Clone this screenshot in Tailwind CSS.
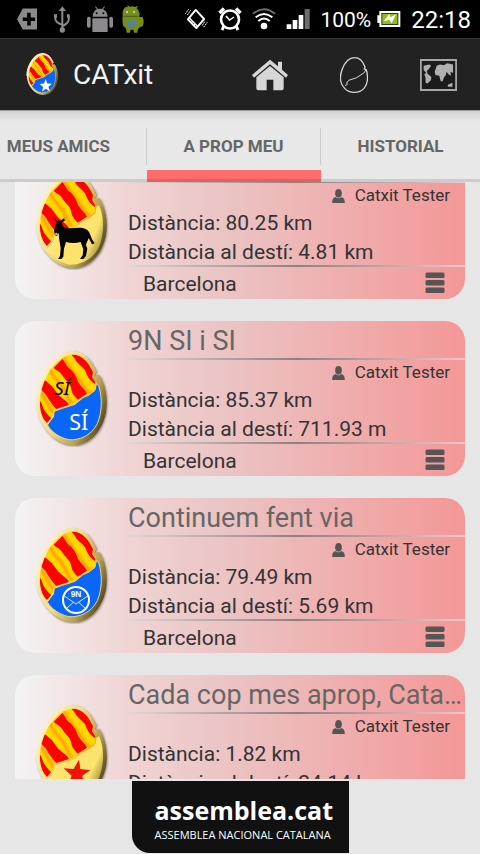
<!DOCTYPE html>
<html lang="ca">
<head>
<meta charset="utf-8">
<meta name="viewport" content="width=device-width, initial-scale=1">
<title>CATxit</title>
<script src="https://cdn.jsdelivr.net/npm/@tailwindcss/browser@4"></script>
</head>
<body class="bg-[#e6e6e6] font-['Roboto',sans-serif] text-[#333]">
<svg class="absolute size-0" aria-hidden="true">
  <defs>
    <linearGradient id="rim" x1="0" y1="0.2" x2="1" y2="0.75">
      <stop offset="0" stop-color="#fff3d8"/><stop offset="0.45" stop-color="#f3dd84"/><stop offset="0.75" stop-color="#b8a04e"/><stop offset="1" stop-color="#4a3f1c"/>
    </linearGradient>
    <linearGradient id="cream" x1="0" y1="0.3" x2="1" y2="0.8">
      <stop offset="0" stop-color="#fff0b0"/><stop offset="0.3" stop-color="#fde46c"/><stop offset="0.75" stop-color="#fbe36e"/><stop offset="1" stop-color="#8a7636"/>
    </linearGradient>
    <filter id="soft" x="-10%" y="-10%" width="120%" height="120%"><feGaussianBlur stdDeviation="2.5"/></filter>
    <clipPath id="top"><path d="M158 29C188 28 208 50 222 82L219 96L230 114L227 134L206 150L190 156L166 176L128 188L104 197L101 214L84 234C68 218 61 192 63 162C68 104 110 32 158 29Z"/></clipPath>
    <symbol id="egg" viewBox="45 15 225 291">
      <path d="M160 22C200 24 218 48 235 82L229 94L243 92C264 122 268 167 263 203C253 258 218 304 164 303C108 303 56 240 55 174Z" fill="#3a3020" opacity=".6" filter="url(#soft)"/>
      <path d="M157 18C197 18 215 45 232 80L226 92L240 90C262 122 267 165 261 200C251 255 215 300 160 300C105 298 51 235 51 170C52 95 105 18 157 18Z" fill="url(#rim)"/>
      <g clip-path="url(#top)">
        <path d="M40 15H250V250H40Z" fill="#ffd800"/>
        <path d="M135 38C150 70 178 96 190 118S208 140 218 148M92 72C105 105 128 115 138 140S152 166 160 176M66 140C80 165 88 185 108 208" fill="none" stroke="#ff9c00" stroke-width="9" filter="url(#soft)"/>
        <path d="M152 22L184 22C212 42 224 76 236 112L226 116C212 106 206 96 198 76C190 64 174 56 168 42ZM104 68L130 42C140 52 142 66 154 72C170 88 172 98 178 112C186 126 196 130 204 146L176 164C164 150 158 144 156 128C150 110 138 106 132 94C124 78 112 78 104 68ZM70 104C82 104 90 118 98 122C110 138 114 146 124 154C132 164 142 166 150 180L112 192C104 184 92 168 86 158C78 142 70 140 62 128ZM54 158C66 166 70 182 74 192C82 204 92 218 102 222L86 246C68 226 54 200 54 158Z" fill="#fb0300"/>
      </g>
    </symbol>
    <symbol id="shell" viewBox="45 15 225 291">
      <path d="M232 116L239 122C251 160 249 202 235 236C215 274 180 286 150 284C122 278 98 262 85 240L103 216L106 199L130 190L168 178L192 158L210 150L228 136Z" fill="currentColor" stroke="#f2d28a" stroke-width="3"/>
    </symbol>
    <symbol id="shellcream" viewBox="45 15 225 291">
      <path d="M232 116L240 112C258 150 254 202 240 236C220 278 180 292 150 290C118 282 96 262 83 242L103 216L106 199L130 190L168 178L192 158L210 150L228 136Z" fill="url(#cream)"/>
      <path d="M83 242L103 216L106 199L130 190L168 178L192 158L210 150L228 136L232 116" fill="none" stroke="#e9ac58" stroke-width="2"/>
    </symbol>
    <symbol id="user" viewBox="0 0 38 42">
      <ellipse cx="19" cy="13" rx="10" ry="13"/><path d="M0 42C0 31 3 26 11 24C15 29 23 29 27 24C35 26 38 31 38 42Z"/>
    </symbol>
    <symbol id="menu" viewBox="0 0 20 22">
      <rect x=".5" y=".5" width="19" height="5.500" rx="1.500"/><rect x=".5" y="8" width="19" height="5.500" rx="1.500"/><rect x=".5" y="15.500" width="19" height="5.500" rx="1.500"/>
    </symbol>
  </defs>
</svg>

<div class="flex h-screen flex-col overflow-hidden">
  <div class="flex h-[38px] shrink-0 items-center bg-black pr-[9px] pl-[17px] text-white">
    <div class="flex items-center gap-[17px]">
      <svg class="h-[22px] w-5" viewBox="50 25 62 65"><path d="M50 58L68 25H112V90H68Z" fill="#8c8a8c"/><path d="M87 38V78M68 58H106" stroke="#000" stroke-width="11"/></svg>
      <svg class="h-[27px] w-4" viewBox="166 16 48 81" fill="none" stroke="#8c8a8c" stroke-width="6"><path d="M191 28V88M170 46V56Q172 66 190 72M210 46V58Q208 68 192 76"/><path d="M180 31L191 17L202 31ZM166 41H175V51H166ZM205 41H213V51H205Z" fill="#8c8a8c" stroke="none"/><circle cx="191" cy="88" r="8" fill="#8c8a8c" stroke="none"/></svg>
      <svg class="h-[26px] w-[26px]" viewBox="258 18 78 78" fill="#8c8a8c"><path d="M275 50C276 36 283 30 288 28L282 20L284 19L291 27Q297 25 303 27L310 19L312 20L306 28C312 31 319 37 320 50Z"/><rect x="274" y="55" width="46" height="41" rx="2"/><rect x="258" y="50" width="11" height="33" rx="5"/><rect x="325" y="50" width="11" height="33" rx="5"/><circle cx="287" cy="40" r="3" fill="#000"/><circle cx="307" cy="40" r="3" fill="#000"/></svg>
      <svg class="-ml-2 h-[28px] w-[22px]" viewBox="364 14 66 84"><path d="M366 44C364 24 376 18 382 20L378 14L388 19Q396 16 402 20L412 16L408 24C416 32 418 40 416 50L426 50Q432 62 426 78L418 80L412 86L410 97H400L398 88H390L388 97H378L376 84L368 78Q364 66 366 44Z" fill="#768c1b"/><path d="M368 48H414" stroke="#4b5d10" stroke-width="3"/><circle cx="379" cy="35" r="3" fill="#dde"/><circle cx="400" cy="35" r="3" fill="#dde"/><path d="M374 58L390 64L404 57L402 70L408 82L394 77L380 84L382 72Z" fill="#4e83b0"/></svg>
    </div>
    <div class="ml-auto flex items-center gap-[10px]">
      <svg class="h-6 w-6" viewBox="556 22 74 72" fill="none" stroke="#fff" stroke-width="5"><path d="M592 30L618 58L594 86L568 59Z" stroke-linejoin="round" stroke-width="6"/><path d="M572 54L599 82M583 65L577 71M591 73L585 79" stroke-width="4"/><path d="M570 28L560 42M577 31L566 46M628 68L616 84M620 66L611 80" stroke-width="3" stroke-dasharray="5 2"/></svg>
      <svg class="h-6 w-6" viewBox="0 0 24 24" fill="none" stroke="#fff"><circle cx="12" cy="12.500" r="9" stroke-width="2.600"/><path d="M8 9L11.500 13L16 10" stroke-width="1.500"/><path d="M1.500 6L6 1.500M18 1.500L22.500 6" stroke-width="3.500"/><path d="M6 19L4 23M18 19L20 23" stroke-width="3"/></svg>
      <svg class="h-[22px] w-6" viewBox="44 22 72 66" fill="none" stroke-width="6"><path d="M47 39Q80 12 113 39" stroke="#6d6d6d"/><path d="M55 50Q80 30 105 50M63 61Q80 46 97 61" stroke="#fff"/><circle cx="80" cy="76" r="10" fill="#fff"/></svg>
      <svg class="h-5 w-6" viewBox="149 27 70 60" fill="#fff"><path d="M150 73H164V87H150ZM168 60H182V87H168ZM186 45H200V87H186Z"/><path d="M204 27H219V87H204Z" fill="#6d6d6d"/></svg>
      <span class="pt-px text-[21px] leading-8">100%</span>
      <svg class="-ml-1 h-4 w-6" viewBox="414 33 70 48"><path d="M420 33H483V81H420V69H414V46H420Z" fill="#fff"/><path d="M426 39H477V75H426Z" fill="#333"/><path d="M429 42H474V72H429Z" fill="#8cc01e"/><path d="M433 64L450 42L454 52L470 43L457 70L450 59Z" fill="#fff"/></svg>
      <span class="pt-[2px] text-2xl leading-8">22:18</span>
    </div>
  </div>

  <header class="flex h-[72px] shrink-0 items-center border-t border-[#333] bg-[#222] pr-[23px] pl-[26px]">
    <div class="relative h-[43px] w-[33px]">
      <svg class="absolute inset-0 size-full"><use href="#egg"/></svg>
      <svg class="absolute inset-0 size-full text-[#0a66f5]"><use href="#shell"/></svg>
      <svg class="absolute inset-0 size-full" viewBox="45 15 225 291"><path d="M51 170C52 95 105 18 157 18C197 18 215 45 232 80" fill="none" stroke="#fff0c0" stroke-width="7"/><path d="M180 192L190 222L222 224L198 244L208 276L180 258L154 278L162 246L138 226L168 222Z" fill="#fff"/></svg>
    </div>
    <h1 class="ml-[14px] text-[28px] leading-8 text-[#f3f3f3]">CATxit</h1>
    <nav class="ml-auto flex items-center gap-[52px]">
      <button aria-label="Inici"><svg class="block h-8 w-9" viewBox="36 176 108 96" fill="#d6d6d6"><path d="M36 224L90 178L114 198V184H126V208L144 224L138 232L90 192L42 232Z"/><path d="M49 231L90 197L131 231V264Q131 270 125 270H100V238H80V270H55Q49 270 49 264Z"/></svg></button>
      <button aria-label="Ous"><svg class="block h-9 w-7" viewBox="300 168 84 108" fill="none" stroke="#d6d6d6" stroke-width="4"><path d="M344 170C362 170 370 184 375 198L373 204L379 206C386 232 382 250 372 262C358 278 328 278 314 262C300 248 298 228 306 206C314 184 326 170 344 170Z"/><path d="M377 206L374 214L350 230L326 238L320 246L322 250L315 254" stroke-width="3"/></svg></button>
      <button aria-label="Mapa"><svg class="block h-8 w-[37px]" viewBox="539 174 113 96" fill="#b0b0b0"><path d="M541 176H650V268H541Z" fill="#1c1c1c" stroke="#a6a6a6" stroke-width="7"/><path d="M550 194L568 190L573 194L566 204L560 210L562 218L574 228L572 238L562 248L556 246V230L552 220L558 216L550 206ZM586 206L590 194L600 190L612 192L622 186L640 190V216L632 212L634 224L626 220L620 212L618 222L612 230L608 242L602 240L598 224L586 222L584 212ZM624 252L638 246V258H624Z"/></svg></button>
    </nav>
  </header>

  <div role="tablist" class="grid h-[72px] shrink-0 grid-cols-[147fr_174fr_159fr] border-t border-[#999] bg-linear-to-b from-[#d4d4d4] to-[#e8e8e8] to-15% text-[17px] font-bold text-[#666]">
    <button role="tab" class="flex flex-col"><span class="mt-[17px] flex h-[37px] w-full items-center justify-end border-r border-[#ccc] pr-9 whitespace-nowrap">MEUS AMICS</span><span class="mt-auto h-[3px] w-full bg-[#ccc]"></span></button>
    <button role="tab" aria-selected="true" class="flex flex-col"><span class="mt-[17px] flex h-[37px] w-full items-center justify-center border-r border-[#ccc] whitespace-nowrap">A PROP MEU</span><span class="mt-auto h-3 w-full border-b-[3px] border-[#e06161] bg-[#ff6c6c]"></span></button>
    <button role="tab" class="flex flex-col"><span class="mt-[17px] flex h-[37px] w-full items-center justify-center">HISTORIAL</span><span class="mt-auto h-[3px] w-full bg-[#ccc]"></span></button>
  </div>

  <main class="min-h-0 flex-1 overflow-hidden px-[15px]">
    <div class="-mt-[38px] flex flex-col gap-[22px]">

      <article class="flex items-center rounded-[20px] bg-[linear-gradient(to_right,#f4f4f4,#f0d4d4_25%,#ebc3c3_48%,#f49797)] pl-[19px]">
        <div class="relative h-[97px] w-[75px] shrink-0">
          <svg class="absolute inset-0 size-full"><use href="#egg"/></svg>
          <svg class="absolute inset-0 size-full"><use href="#shellcream"/></svg>
          <svg class="absolute inset-0 size-full" viewBox="45 15 225 291"><g transform="translate(15 36)"><path d="M84 111L100 122L110 122L124 111L119 118L125 119L114 128L116 138C120 143 128 145 138 145C156 144 178 140 190 150C198 158 200 168 204 178L212 190L204 193L194 174C192 182 186 188 186 196L190 206L186 228L178 237H168L176 226L178 208L170 186C156 190 140 190 126 186L120 206L118 230L112 237H102L108 228L110 204L106 180C104 170 106 164 103 158L99 168L93 166L90 154L95 136L98 126Z" fill="#050505"/><circle cx="97" cy="162" r="4" fill="#e8a090"/></g></svg>
        </div>
        <div class="ml-[19px] min-w-0 flex-1">
          <div class="h-[37px]"></div>
          <div class="h-[2px] bg-linear-to-r from-[#e0d8d8] via-[#8f8080] to-[#eccaca]"></div>
          <div class="flex h-6 items-center justify-end gap-[10px] pt-px pr-[15px] text-[17px]"><svg class="h-[14px] w-[13px] fill-[#555]"><use href="#user"/></svg>Catxit Tester</div>
          <p class="pt-1 text-[21px] leading-[25px]">Distància: 80.25 km</p>
          <p class="pt-1 text-[21px] leading-[25px]">Distància al destí: 4.81 km</p>
          <div class="h-[2px] bg-linear-to-r from-[#e0d8d8] via-[#8f8080] to-[#eccaca]"></div>
          <div class="flex h-8 items-center justify-between pr-5 pl-[15px]"><span class="pt-[3px] text-[21px] leading-[25px]">Barcelona</span><button aria-label="Opcions"><svg class="block h-[22px] w-5 fill-[#555]"><use href="#menu"/></svg></button></div>
        </div>
      </article>

      <article class="flex items-center rounded-[20px] bg-[linear-gradient(to_right,#f4f4f4,#f0d4d4_25%,#ebc3c3_48%,#f49797)] pl-[19px]">
        <div class="relative h-[97px] w-[75px] shrink-0">
          <svg class="absolute inset-0 size-full"><use href="#egg"/></svg>
          <svg class="absolute inset-0 size-full text-[#0a66f5]"><use href="#shell"/></svg>
          <svg class="absolute inset-0 size-full font-['Noto_Sans',sans-serif]" viewBox="45 15 225 291"><text x="106" y="151" fill="#000" font-size="56" font-style="italic">SÍ</text><text x="151" y="254" fill="#fff" font-size="64">SÍ</text></svg>
        </div>
        <div class="ml-[19px] min-w-0 flex-1">
          <h2 class="truncate pt-1 text-[27px] leading-[33px] text-[#666]">9N SI i SI</h2>
          <div class="h-[2px] bg-linear-to-r from-[#e0d8d8] via-[#8f8080] to-[#eccaca]"></div>
          <div class="flex h-6 items-center justify-end gap-[10px] pt-px pr-[15px] text-[17px]"><svg class="h-[14px] w-[13px] fill-[#555]"><use href="#user"/></svg>Catxit Tester</div>
          <p class="pt-1 text-[21px] leading-[25px]">Distància: 85.37 km</p>
          <p class="pt-1 text-[21px] leading-[25px]">Distància al destí: 711.93 m</p>
          <div class="h-[2px] bg-linear-to-r from-[#e0d8d8] via-[#8f8080] to-[#eccaca]"></div>
          <div class="flex h-8 items-center justify-between pr-5 pl-[15px]"><span class="pt-[3px] text-[21px] leading-[25px]">Barcelona</span><button aria-label="Opcions"><svg class="block h-[22px] w-5 fill-[#555]"><use href="#menu"/></svg></button></div>
        </div>
      </article>

      <article class="flex items-center rounded-[20px] bg-[linear-gradient(to_right,#f4f4f4,#f0d4d4_25%,#ebc3c3_48%,#f49797)] pl-[19px]">
        <div class="relative h-[97px] w-[75px] shrink-0">
          <svg class="absolute inset-0 size-full"><use href="#egg"/></svg>
          <svg class="absolute inset-0 size-full text-[#0a66f5]"><use href="#shell"/></svg>
          <svg class="absolute inset-0 size-full font-['Liberation_Sans',sans-serif]" viewBox="45 15 225 291"><circle cx="171" cy="234" r="39" fill="none" stroke="#fff" stroke-width="6"/><path d="M136 222L171 246L206 222M144 258L163 241M198 258L179 241" fill="none" stroke="#fff" stroke-width="2.500"/><text x="171" y="226" text-anchor="middle" font-size="25" font-weight="bold" fill="#fff">9N</text></svg>
        </div>
        <div class="ml-[19px] min-w-0 flex-1">
          <h2 class="truncate pt-1 text-[27px] leading-[33px] text-[#666]">Continuem fent via</h2>
          <div class="h-[2px] bg-linear-to-r from-[#e0d8d8] via-[#8f8080] to-[#eccaca]"></div>
          <div class="flex h-6 items-center justify-end gap-[10px] pt-px pr-[15px] text-[17px]"><svg class="h-[14px] w-[13px] fill-[#555]"><use href="#user"/></svg>Catxit Tester</div>
          <p class="pt-1 text-[21px] leading-[25px]">Distància: 79.49 km</p>
          <p class="pt-1 text-[21px] leading-[25px]">Distància al destí: 5.69 km</p>
          <div class="h-[2px] bg-linear-to-r from-[#e0d8d8] via-[#8f8080] to-[#eccaca]"></div>
          <div class="flex h-8 items-center justify-between pr-5 pl-[15px]"><span class="pt-[3px] text-[21px] leading-[25px]">Barcelona</span><button aria-label="Opcions"><svg class="block h-[22px] w-5 fill-[#555]"><use href="#menu"/></svg></button></div>
        </div>
      </article>

      <article class="flex items-center rounded-[20px] bg-[linear-gradient(to_right,#f4f4f4,#f0d4d4_25%,#ebc3c3_48%,#f49797)] pl-[19px]">
        <div class="relative h-[97px] w-[75px] shrink-0">
          <svg class="absolute inset-0 size-full"><use href="#egg"/></svg>
          <svg class="absolute inset-0 size-full"><use href="#shellcream"/></svg>
          <svg class="absolute inset-0 size-full" viewBox="45 15 225 291"><path d="M180 182L184 210L214 214L190 230L196 260L174 242L148 256L158 230L134 208L164 210Z" fill="#f01408"/></svg>
        </div>
        <div class="ml-[19px] min-w-0 flex-1">
          <h2 class="truncate pt-1 text-[27px] leading-[33px] text-[#666]">Cada cop mes aprop, Catalunya</h2>
          <div class="h-[2px] bg-linear-to-r from-[#e0d8d8] via-[#8f8080] to-[#eccaca]"></div>
          <div class="flex h-6 items-center justify-end gap-[10px] pt-px pr-[15px] text-[17px]"><svg class="h-[14px] w-[13px] fill-[#555]"><use href="#user"/></svg>Catxit Tester</div>
          <p class="pt-1 text-[21px] leading-[25px]">Distància: 1.82 km</p>
          <p class="pt-1 text-[21px] leading-[25px]">Distància al destí: 24.14 km</p>
          <div class="h-[2px] bg-linear-to-r from-[#e0d8d8] via-[#8f8080] to-[#eccaca]"></div>
          <div class="flex h-8 items-center justify-between pr-5 pl-[15px]"><span class="pt-[3px] text-[21px] leading-[25px]">Barcelona</span><button aria-label="Opcions"><svg class="block h-[22px] w-5 fill-[#555]"><use href="#menu"/></svg></button></div>
        </div>
      </article>
    </div>
  </main>

  <footer class="flex shrink-0 justify-center pt-[2px] pb-px">
    <a href="#" class="flex h-[72px] w-[217px] flex-col items-start rounded-bl-[18px] bg-[#111] pt-3 pl-[23px] font-['Open_Sans',sans-serif] text-white">
      <span class="text-[25px] leading-[34px] font-bold">assemblea.cat</span>
      <span class="text-[11px] leading-[15px] whitespace-nowrap">ASSEMBLEA NACIONAL CATALANA</span>
    </a>
  </footer>
</div>
</body>
</html>
